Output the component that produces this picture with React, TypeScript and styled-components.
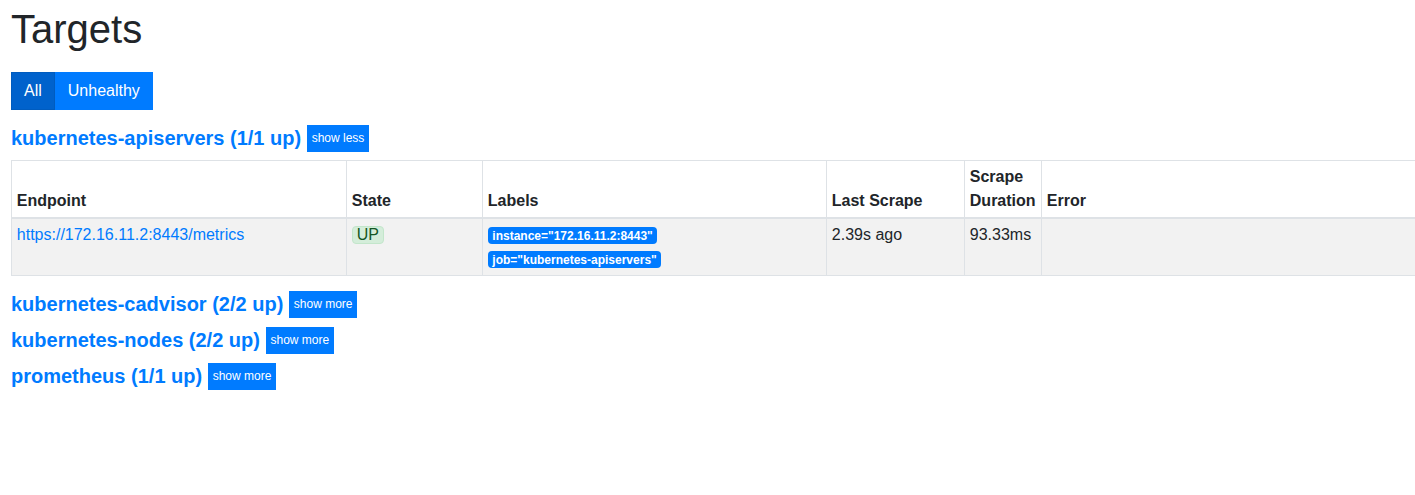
import { useState } from "react";
import styled, { createGlobalStyle } from "styled-components";

const GlobalStyle = createGlobalStyle`
    html {
        overflow-x: hidden;
    }
    body {
        margin: 0;
        background: #fff;
        color: #212529;
        font-family: "Liberation Sans", Arial, sans-serif;
        font-size: 16px;
        line-height: 1.5;
    }
`;

const Page = styled.div`
    padding: 5px 0 0 11px;
`;

const Title = styled.h1`
    margin: 0 0 19px 0;
    font-size: 40px;
    font-weight: 400;
    line-height: 48px;
`;

const FilterGroup = styled.div`
    display: inline-flex;
    margin-bottom: 10px;
`;

const FilterButton = styled.button<{ $active?: boolean }>`
    font-family: inherit;
    font-size: 16px;
    line-height: 24px;
    padding: 6px 12px;
    color: #fff;
    background: ${(p) => (p.$active ? "#0062cc" : "#007bff")};
    border: 1px solid ${(p) => (p.$active ? "#005cbf" : "#007bff")};
    border-radius: 0;
    cursor: pointer;
`;

const PoolHeader = styled.div`
    display: flex;
    align-items: center;
    height: 36px;
`;

const PoolTitle = styled.a`
    font-size: 20px;
    font-weight: 700;
    color: #007bff;
    text-decoration: none;
    line-height: 24px;
`;

const ToggleButton = styled.button`
    margin-left: 6px;
    height: 27px;
    padding: 0 4.5px;
    font-family: inherit;
    font-size: 12px;
    color: #fff;
    background: #007bff;
    border: none;
    border-radius: 0;
    cursor: pointer;
`;

const Table = styled.table`
    width: 1430px;
    table-layout: fixed;
    border-collapse: collapse;
    margin: 4px 0 10px 0;
`;

const Th = styled.th`
    padding: 4px 4.8px;
    vertical-align: bottom;
    text-align: left;
    font-weight: 700;
    line-height: 24px;
    border: 1px solid #dee2e6;
    border-bottom-width: 2px;
`;

const Td = styled.td`
    padding: 4px 4.8px 5px 4.8px;
    vertical-align: top;
    line-height: 24px;
    border: 1px solid #dee2e6;
`;

const Row = styled.tr<{ $striped?: boolean }>`
    background: ${(p) => (p.$striped ? "#f2f2f2" : "transparent")};
`;

const EndpointLink = styled.a`
    color: #007bff;
    text-decoration: none;
`;

const StateBadge = styled.span`
    display: inline-block;
    line-height: 16px;
    padding: 0 4px;
    margin-top: 2px;
    color: #155724;
    background: #d4edda;
    border: 1px solid #c3e6cb;
    border-radius: 4px;
`;

const LabelList = styled.div`
    display: flex;
    flex-direction: column;
    align-items: flex-start;
    gap: 7px;
    padding: 4px 0 2px 0;
`;

const LabelBadge = styled.span`
    display: inline-block;
    font-size: 12px;
    font-weight: 700;
    line-height: 12px;
    padding: 2.5px 4.5px;
    color: #fff;
    background: #007bff;
    border-radius: 4px;
    white-space: nowrap;
`;

type Target = {
    endpoint: string;
    state: string;
    labels: Record<string, string>;
    lastScrape: string;
    duration: string;
    error: string;
};

type Pool = {
    name: string;
    up: number;
    total: number;
    targets: Target[];
};

const pools: Pool[] = [
    {
        name: "kubernetes-apiservers",
        up: 1,
        total: 1,
        targets: [
            {
                endpoint: "https://172.16.11.2:8443/metrics",
                state: "UP",
                labels: { instance: "172.16.11.2:8443", job: "kubernetes-apiservers" },
                lastScrape: "2.39s ago",
                duration: "93.33ms",
                error: "",
            },
        ],
    },
    { name: "kubernetes-cadvisor", up: 2, total: 2, targets: [] },
    { name: "kubernetes-nodes", up: 2, total: 2, targets: [] },
    { name: "prometheus", up: 1, total: 1, targets: [] },
];

const TargetTable = ({ targets }: { targets: Target[] }) => (
    <Table>
        <colgroup>
            <col style={{ width: 335 }} />
            <col style={{ width: 136 }} />
            <col style={{ width: 344 }} />
            <col style={{ width: 138 }} />
            <col style={{ width: 77 }} />
            <col />
        </colgroup>
        <thead>
            <tr>
                <Th>Endpoint</Th>
                <Th>State</Th>
                <Th>Labels</Th>
                <Th>Last Scrape</Th>
                <Th>Scrape Duration</Th>
                <Th>Error</Th>
            </tr>
        </thead>
        <tbody>
            {targets.map((t) => (
                <Row $striped key={t.endpoint}>
                    <Td>
                        <EndpointLink href="#">{t.endpoint}</EndpointLink>
                    </Td>
                    <Td>
                        <StateBadge>{t.state}</StateBadge>
                    </Td>
                    <Td>
                        <LabelList>
                            {Object.entries(t.labels).map(([k, v]) => (
                                <LabelBadge key={k}>{`${k}="${v}"`}</LabelBadge>
                            ))}
                        </LabelList>
                    </Td>
                    <Td>{t.lastScrape}</Td>
                    <Td>{t.duration}</Td>
                    <Td>{t.error}</Td>
                </Row>
            ))}
        </tbody>
    </Table>
);

const App = () => {
    const [filter, setFilter] = useState<"all" | "unhealthy">("all");
    const [open, setOpen] = useState<Record<string, boolean>>({ "kubernetes-apiservers": true });

    return (
        <Page>
            <GlobalStyle />
            <Title>Targets</Title>
            <FilterGroup>
                <FilterButton $active={filter === "all"} onClick={() => setFilter("all")}>
                    All
                </FilterButton>
                <FilterButton $active={filter === "unhealthy"} onClick={() => setFilter("unhealthy")}>
                    Unhealthy
                </FilterButton>
            </FilterGroup>
            {pools.map((pool) => (
                <div key={pool.name}>
                    <PoolHeader>
                        <PoolTitle href="#">
                            {pool.name} ({pool.up}/{pool.total} up)
                        </PoolTitle>
                        <ToggleButton onClick={() => setOpen({ ...open, [pool.name]: !open[pool.name] })}>
                            {open[pool.name] ? "show less" : "show more"}
                        </ToggleButton>
                    </PoolHeader>
                    {open[pool.name] && <TargetTable targets={pool.targets} />}
                </div>
            ))}
        </Page>
    );
};

export default App;
